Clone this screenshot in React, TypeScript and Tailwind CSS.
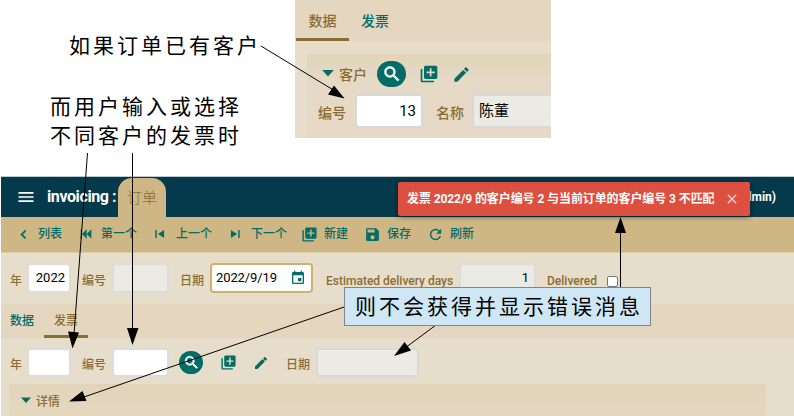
import type { ReactNode } from "react";

const icons = {
  menu: "M3,6H21V8H3V6M3,11H21V13H3V11M3,16H21V18H3V16Z",
  left: "M15.41,16.58L10.83,12L15.41,7.41L14,6L8,12L14,18L15.41,16.58Z",
  first: "M20,5V19L13,12M6,5V19H4V5M13,5V19L6,12",
  previous: "M4,5V19H6.5V5H4M8.5,12L19,5V19L8.5,12Z",
  next: "M17.5,5V19H20V5H17.5M15.5,12L5,5V19L15.5,12Z",
  add: "M19,11H15V15H13V11H9V9H13V5H15V9H19M20,2H8A2,2 0 0,0 6,4V16A2,2 0 0,0 8,18H20A2,2 0 0,0 22,16V4A2,2 0 0,0 20,2M4,6H2V20A2,2 0 0,0 4,22H18V20H4V6Z",
  save: "M15,9H5V5H15M12,19A3,3 0 0,1 9,16A3,3 0 0,1 12,13A3,3 0 0,1 15,16A3,3 0 0,1 12,19M17,3H5C3.89,3 3,3.9 3,5V19A2,2 0 0,0 5,21H19A2,2 0 0,0 21,19V7L17,3Z",
  refresh: "M17.65,6.35C16.2,4.9 14.21,4 12,4A8,8 0 0,0 4,12A8,8 0 0,0 12,20C15.73,20 18.84,17.45 19.73,14H17.65C16.83,16.33 14.61,18 12,18A6,6 0 0,1 6,12A6,6 0 0,1 12,6C13.66,6 15.14,6.69 16.22,7.78L13,11H20V4L17.65,6.35Z",
  search: "M9.5,3A6.5,6.5 0 0,1 16,9.5C16,11.11 15.41,12.59 14.44,13.73L14.71,14H15.5L20.5,19L19,20.5L14,15.5V14.71L13.73,14.44C12.59,15.41 11.11,16 9.5,16A6.5,6.5 0 0,1 3,9.5A6.5,6.5 0 0,1 9.5,3M9.5,5C7,5 5,7 5,9.5C5,12 7,14 9.5,14C12,14 14,12 14,9.5C14,7 12,5 9.5,5Z",
  pencil: "M20.71,7.04C21.1,6.65 21.1,6 20.71,5.63L18.37,3.29C18,2.9 17.35,2.9 16.96,3.29L15.12,5.12L18.87,8.87M3,17.25V21H6.75L17.81,9.93L14.06,6.18L3,17.25Z",
  calendar: "M19,19H5V8H19M16,1V3H8V1H6V3H5C3.89,3 3,3.89 3,5V19A2,2 0 0,0 5,21H19A2,2 0 0,0 21,19V5C21,3.89 20.1,3 19,3H18V1M17,12H12V17H17V12Z",
  close: "M19,6.41L17.59,5L12,10.59L6.41,5L5,6.41L10.59,12L5,17.59L6.41,19L12,13.41L17.59,19L19,17.59L13.41,12L19,6.41Z",
  triangle: "M2,7H22L12,18Z",
};

function Icon({ name, className = "size-4", bold = false }: { name: keyof typeof icons; className?: string; bold?: boolean }) {
  return (
    <svg viewBox="0 0 24 24" className={`shrink-0 ${className}`} fill="currentColor" stroke={bold ? "currentColor" : "none"} strokeWidth={0.8}>
      <path d={icons[name]} />
    </svg>
  );
}

function Label({ className, children }: { className: string; children: ReactNode }) {
  return <span className={`shrink-0 font-medium text-[#8b6d34] ${className}`}>{children}</span>;
}

function Field({ className, children }: { className: string; children?: ReactNode }) {
  return <div className={`flex shrink-0 items-center rounded-[4px] border-2 text-black ${className}`}>{children}</div>;
}

const actions: { icon: keyof typeof icons; text: string; slot: string; size: string; bold?: boolean }[] = [
  { icon: "left", text: "列表", slot: "w-[63px]", size: "size-[17px]", bold: true },
  { icon: "first", text: "第一个", slot: "w-[75px]", size: "size-4" },
  { icon: "previous", text: "上一个", slot: "w-[75px]", size: "size-[14px]" },
  { icon: "next", text: "下一个", slot: "w-[73px]", size: "size-[14px]" },
  { icon: "add", text: "新建", slot: "w-[63px]", size: "size-[17px]" },
  { icon: "save", text: "保存", slot: "w-[63px]", size: "size-[17px]" },
  { icon: "refresh", text: "刷新", slot: "w-[63px]", size: "size-[17px]" },
];

function CustomerPanel() {
  return (
    <section className="ml-[295px] h-[138px] w-64 overflow-hidden bg-[#e7ddcb] text-sm leading-none">
      <nav className="flex h-[41px] bg-[#e5d6c0] font-medium">
        <span className="ml-px flex w-[53px] items-center justify-center border-b-[3px] border-[#8b6d34] pt-1 text-[#8b6d34]">数据</span>
        <span className="flex w-[52px] items-center justify-center pt-px text-[#026d67]">发票</span>
      </nav>
      <div className="mt-[13px] ml-[12px] h-[84px] rounded-tl-sm bg-linear-to-b from-[#e1d4ba] to-[#e6d9c5] to-30%">
        <div className="flex h-10 items-center pl-[14px] text-[#026d67]">
          <Icon name="triangle" className="mt-[-2px] size-[14px]" />
          <Label className="ml-1 w-[38px] pt-0.5">客户</Label>
          <span className="flex h-[26px] w-[29px] items-center justify-center rounded-full bg-[#026d67] text-white"><Icon name="search" className="size-5" bold /></span>
          <Icon name="add" className="ml-[13px] size-5" />
          <Icon name="pencil" className="ml-[13px] size-[19px]" />
        </div>
        <div className="flex h-[34px] items-center pl-[11px]">
          <Label className="w-[37px] pt-1">编号</Label>
          <Field className="h-[34px] w-[68px] justify-end border-[#d8d8d8] bg-white pr-[5px] text-[15px]">13</Field>
          <Label className="ml-[13px] w-9 pt-1">名称</Label>
          <Field className="h-[34px] w-28 border-[#d8d8d8] bg-[#ebebe4] pl-[5px] text-[15px]">陈董</Field>
        </div>
      </div>
    </section>
  );
}

function Invoicing() {
  return (
    <section className="mt-[38px] ml-px h-60 overflow-hidden border-t border-[#bdcbd0] bg-[#e7ddcb] text-xs leading-none">
      <header className="flex h-[40px] items-center bg-[#043a4c] text-white">
        <Icon name="menu" className="ml-[15px] size-5" />
        <strong className="ml-[11px] w-[71px] text-base tracking-[-0.4px]">invoicing :</strong>
        <span className="mt-px flex h-[39px] w-12 items-center justify-center rounded-t-[14px] bg-[#cfb785] pt-0.5 text-[15px] font-light text-[#8b6d34]">订单</span>
        <span className="ml-auto pr-[18px] text-xs font-bold">(admin)</span>
      </header>
      <nav className="flex h-9 items-center border-b border-[#dbcdae] bg-[#cfb785] pb-px pl-[14px] font-medium text-[#026d67]">
        {actions.map((action) => (
          <span key={action.text} className={`flex shrink-0 items-center ${action.slot}`}>
            <span className="flex w-[23px] items-center"><Icon name={action.icon} className={action.size} bold={action.bold} /></span>
            {action.text}
          </span>
        ))}
      </nav>
      <div className="flex h-[51px] items-center pl-[9px]">
        <Label className="w-[17px] pt-1">年</Label>
        <Field className="mt-[-2px] h-[30px] w-[44px] justify-end border-[#dcdcdc] bg-white pr-1 text-[13px]">2022</Field>
        <Label className="ml-[11px] w-[30px] pt-1">编号</Label>
        <Field className="mt-[-2px] h-[30px] w-[57px] border-[#dcdcdc] bg-[#ebebe4]" />
        <Label className="ml-[11px] w-[30px] pt-1">日期</Label>
        <Field className="mt-[-2px] h-[30px] w-[103px] justify-between border-[#cfb070] bg-white pr-[5px] pl-1 text-[13px]">
          <span className="tracking-[-0.1px]">2022/9/19</span>
          <span className="flex text-[#026d67]"><Icon name="calendar" className="size-4" /></span>
        </Field>
        <Label className="ml-[13px] w-[133px] pt-1">Estimated delivery days</Label>
        <Field className="mt-[-2px] h-[30px] w-[77px] justify-end border-[#dcdcdc] bg-[#ebebe4] pr-[5px] text-[13px]">1</Field>
        <Label className="ml-[11px] w-[60px] pt-1">Delivered</Label>
        <span className="mt-[5px] size-[11px] rounded-[2px] border border-[#777] bg-white" />
      </div>
      <nav className="flex h-[34px] bg-[#e5d6c0] font-medium">
        <span className="flex w-[42px] items-center justify-center text-[#026d67]">数据</span>
        <span className="ml-px flex w-11 items-center justify-center border-b-[3px] border-[#8b6d34] pt-[3px] text-[#8b6d34]">发票</span>
      </nav>
      <div className="flex h-[46px] items-center pt-[3px] pl-[9px] text-[#026d67]">
        <Label className="w-[17px] pt-1">年</Label>
        <Field className="h-[29px] w-[44px] border-[#dcdcdc] bg-white" />
        <Label className="ml-[11px] w-[30px] pt-1">编号</Label>
        <Field className="h-[29px] w-[57px] border-[#dcdcdc] bg-white" />
        <span className="ml-[10px] flex h-[23px] w-6 items-center justify-center rounded-full bg-[#026d67] text-white"><Icon name="search" className="size-[17px]" bold /></span>
        <Icon name="add" className="ml-[17px] size-[17px]" />
        <Icon name="pencil" className="ml-4 size-4" />
        <Label className="ml-[17px] w-[30px] pt-1">日期</Label>
        <Field className="h-[29px] w-[103px] border-[#d8d8d8] bg-[#ebebe4]" />
      </div>
      <div className="ml-2 flex h-8 w-[757px] items-center bg-linear-to-b from-[#e1d4ba] to-[#e5d8c0] pl-[11px] text-[#026d67]">
        <Icon name="triangle" className="size-3" />
        <Label className="ml-1 pt-1">详情</Label>
      </div>
    </section>
  );
}

export default function App() {
  return (
    <main className="relative h-[416px] w-[794px] overflow-hidden bg-white font-['Roboto','Noto_Sans_CJK_SC',sans-serif] whitespace-nowrap">
      <CustomerPanel />
      <Invoicing />
      <div role="alert" className="absolute top-[182px] left-[398px] flex h-[34px] w-[352px] items-center rounded-[2px] bg-[#dd4f3e] pl-[9px] text-xs font-bold text-white shadow-[0_1px_5px_#0008]">
        <span className="w-[317px] tracking-[-0.09px]">发票 2022/9 的客户编号 2 与当前订单的客户编号 3 不匹配</span>
        <Icon name="close" className="size-4 opacity-75" />
      </div>
      <svg className="absolute inset-0" width="794" height="416" fill="black" stroke="black" strokeWidth="1">
        <path d="M261 46L335 91M87.5 153L74 334M132.500 153V330M347 306L84 397M436 325L405 348M620.500 290V231" fill="none" />
        <g stroke="none">
          <path d="M344.500 98.500L328 94.500L334 85.500Z" />
          <path d="M72.500 348.500L68 331.500L79 332.500Z" />
          <path d="M132.500 345L127 328H138.500Z" />
          <path d="M69 401.500L82.500 391L86.500 401Z" />
          <path d="M394 356L404.500 342L411 350.500Z" />
          <path d="M620.500 217L615 233H626Z" />
        </g>
      </svg>
      <p className="absolute top-[30px] left-[69px] font-['Noto_Sans_CJK_SC',sans-serif] text-[21px] leading-[29px] tracking-[3px]">如果订单已有客户</p>
      <p className="absolute top-[91px] left-[50px] font-['Noto_Sans_CJK_SC',sans-serif] text-[21px] leading-[29px] tracking-[3px]">而用户输入或选择<br />不同客户的发票时</p>
      <p className="absolute top-[287px] left-[344px] flex h-[39px] w-[307px] items-center border border-[#7f8589] bg-[#cfe6f5] pb-px pl-[10px] font-['Noto_Sans_CJK_SC',sans-serif] text-[21px] tracking-[3px]">则不会获得并显示错误消息</p>
    </main>
  );
}
